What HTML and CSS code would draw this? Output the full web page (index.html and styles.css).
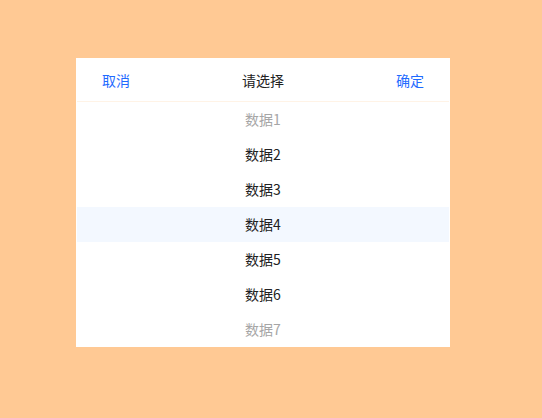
FILE: index.html
```html
<!DOCTYPE html>
<html lang="zh-CN">
<head>
<meta charset="UTF-8">
<meta name="viewport" content="width=device-width, initial-scale=1.0">
<title>Picker</title>
<link rel="stylesheet" href="styles.css">
</head>
<body>
  <div class="stage">
    <div class="picker">
      <div class="picker-header">
        <span class="btn cancel">取消</span>
        <span class="title">请选择</span>
        <span class="btn confirm">确定</span>
      </div>
      <ul class="picker-list">
        <li class="item faded">数据1</li>
        <li class="item">数据2</li>
        <li class="item">数据3</li>
        <li class="item active">数据4</li>
        <li class="item">数据5</li>
        <li class="item">数据6</li>
        <li class="item faded">数据7</li>
      </ul>
    </div>
  </div>
</body>
</html>
```

FILE: styles.css
```css
html, body {
  margin: 0;
  padding: 0;
  height: 100%;
}
body {
  font-family: "Noto Sans CJK SC", "Noto Sans", sans-serif;
  font-size: 14px;
  background-color: #ffc994;
  color: #333;
}
.stage {
  padding: 58px 0 0 76px;
}
.picker {
  width: 372px;
  background-color: #fff;
  border: 1px solid #fff;
  border-bottom-width: 0;
}
.picker-header {
  height: 42px;
  display: flex;
  align-items: center;
  justify-content: space-between;
  padding: 0 25px;
  border-bottom: 1px solid #fff3e6;
}
.btn {
  color: #1f6bff;
  cursor: pointer;
}
.title {
  color: #222;
}
.picker-list {
  list-style: none;
  margin: 0;
  padding: 0;
}
.item {
  height: 35px;
  line-height: 35px;
  text-align: center;
  color: #222;
}
.item.faded {
  color: #a6a6a6;
}
.item.active {
  background-color: #f3f8ff;
}
```
